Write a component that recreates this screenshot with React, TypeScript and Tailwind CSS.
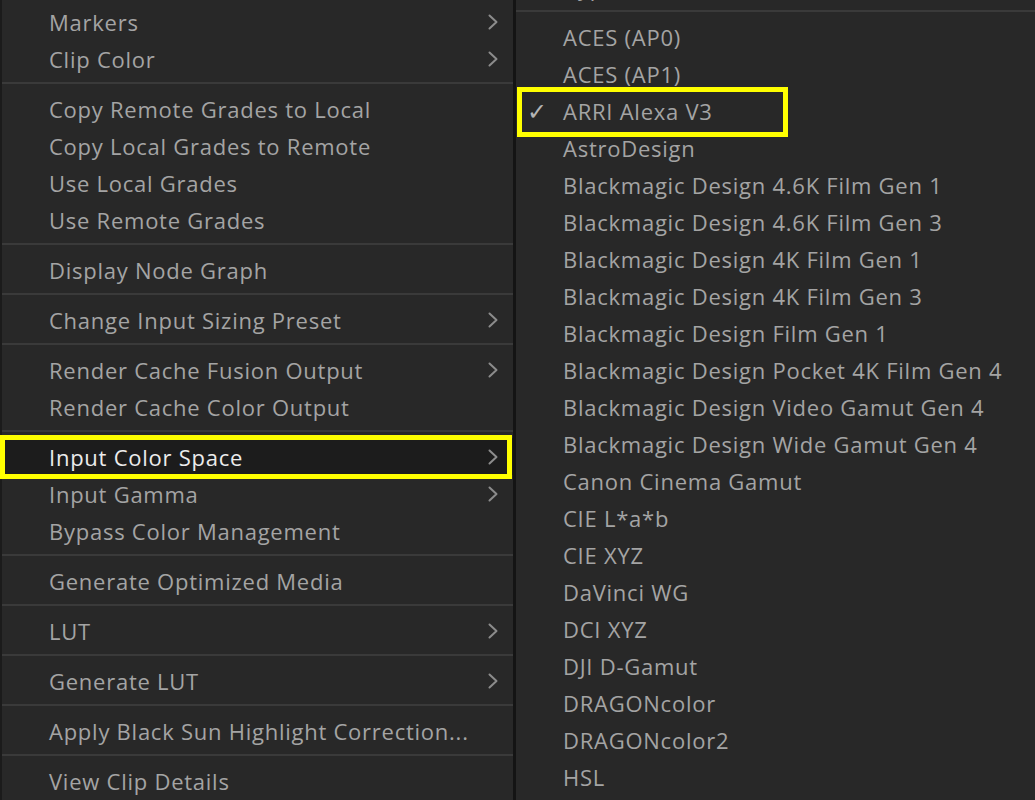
import React from "react";

type Item = { label: string; sub?: boolean; active?: boolean } | "sep";

const left: Item[] = [
  { label: "Markers", sub: true },
  { label: "Clip Color", sub: true },
  "sep",
  { label: "Copy Remote Grades to Local" },
  { label: "Copy Local Grades to Remote" },
  { label: "Use Local Grades" },
  { label: "Use Remote Grades" },
  "sep",
  { label: "Display Node Graph" },
  "sep",
  { label: "Change Input Sizing Preset", sub: true },
  "sep",
  { label: "Render Cache Fusion Output", sub: true },
  { label: "Render Cache Color Output" },
  "sep",
  { label: "Input Color Space", sub: true, active: true },
  { label: "Input Gamma", sub: true },
  { label: "Bypass Color Management" },
  "sep",
  { label: "Generate Optimized Media" },
  "sep",
  { label: "LUT", sub: true },
  "sep",
  { label: "Generate LUT", sub: true },
  "sep",
  { label: "Apply Black Sun Highlight Correction..." },
  "sep",
  { label: "View Clip Details" },
];

const right: string[] = [
  "ACES (AP0)",
  "ACES (AP1)",
  "ARRI Alexa V3",
  "AstroDesign",
  "Blackmagic Design 4.6K Film Gen 1",
  "Blackmagic Design 4.6K Film Gen 3",
  "Blackmagic Design 4K Film Gen 1",
  "Blackmagic Design 4K Film Gen 3",
  "Blackmagic Design Film Gen 1",
  "Blackmagic Design Pocket 4K Film Gen 4",
  "Blackmagic Design Video Gamut Gen 4",
  "Blackmagic Design Wide Gamut Gen 4",
  "Canon Cinema Gamut",
  "CIE L*a*b",
  "CIE XYZ",
  "DaVinci WG",
  "DCI XYZ",
  "DJI D-Gamut",
  "DRAGONcolor",
  "DRAGONcolor2",
  "HSL",
];

function Chevron() {
  return (
    <svg width="12" height="18" viewBox="0 0 12 18" className="shrink-0">
      <path d="M2.5 2.5 L9.5 9 L2.5 15.5" fill="none" stroke="#8c8c8c" strokeWidth="2" strokeLinecap="round" strokeLinejoin="round" />
    </svg>
  );
}

function Sep() {
  return (
    <div className="h-[13px] pt-[5px] shrink-0">
      <div className="h-[2px] bg-[#3a3a3a]" />
    </div>
  );
}

export default function App() {
  return (
    <div className="w-[1035px] h-[800px] overflow-hidden bg-[#282828] flex font-['Open_Sans',sans-serif] text-[22px] tracking-[0.75px] leading-none">
      <div className="w-[513px] shrink-0 border-l-2 border-[#1b1b1b] flex flex-col pt-[3px]">
        {left.map((it, i) =>
          it === "sep" ? (
            <Sep key={i} />
          ) : (
            <div
              key={i}
              className={
                "relative h-[37px] shrink-0 flex items-center justify-between pl-[47px] pr-[14px] " +
                (it.active ? "bg-[#1c1c1c] text-[#ececec]" : "text-[#a4a4a4]")
              }
            >
              <span className="whitespace-nowrap">{it.label}</span>
              {it.sub && <Chevron />}
              {it.active && (
                <div className="absolute left-[-2px] right-[1px] top-[-3px] bottom-[-4px] border-[5px] border-[#ffff00] pointer-events-none" />
              )}
            </div>
          )
        )}
      </div>
      <div className="w-[3px] shrink-0 bg-[#141414]" />
      <div className="flex-1 flex flex-col mt-[-32px]">
        <div className="h-[37px] shrink-0 flex items-center pl-[47px] text-[#a4a4a4]">
          <span>Bypass</span>
        </div>
        <Sep />
        {right.map((label, i) => (
          <div key={i} className="relative h-[37px] shrink-0 flex items-center pl-[47px] text-[#a4a4a4]">
            {label === "ARRI Alexa V3" && (
              <>
                <span className="absolute left-[11px] top-[7px] text-[24px] tracking-normal text-[#b4b4b4]">✓</span>
                <div className="absolute left-[1px] w-[271px] top-[-5px] bottom-[-8px] border-[5px] border-[#ffff00] pointer-events-none" />
              </>
            )}
            <span className="whitespace-nowrap">{label}</span>
          </div>
        ))}
      </div>
    </div>
  );
}
